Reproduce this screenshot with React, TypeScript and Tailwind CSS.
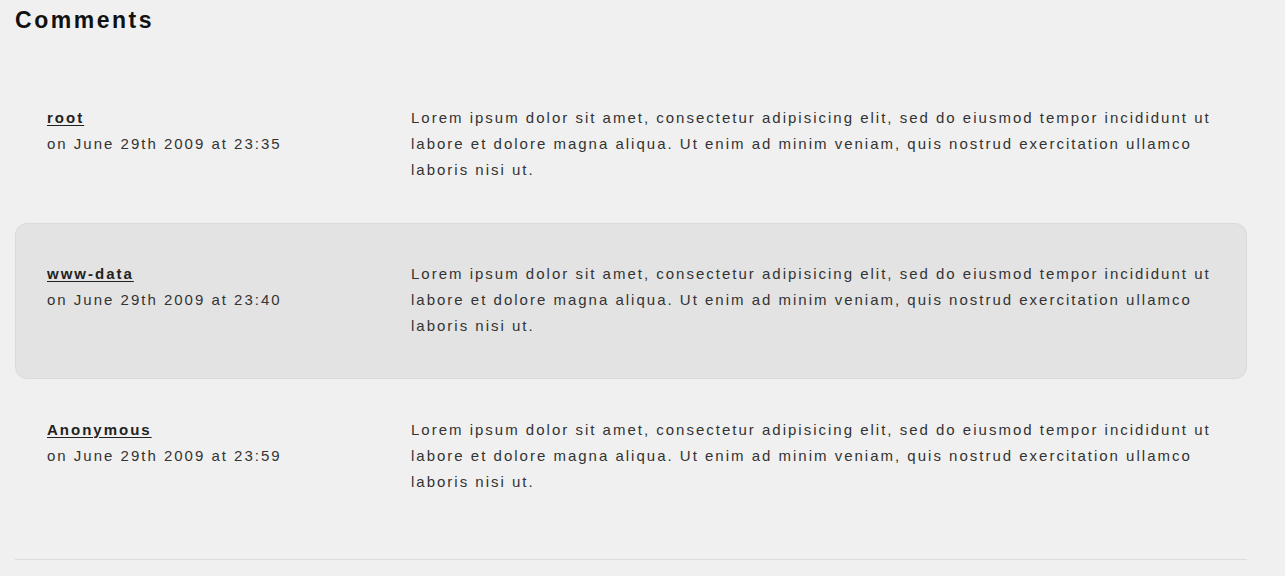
import React from 'react'

type Comment = {
  author: string
  date: string
  body: string
}

const lorem =
  'Lorem ipsum dolor sit amet, consectetur adipisicing elit, sed do eiusmod tempor incididunt ut labore et dolore magna aliqua. Ut enim ad minim veniam, quis nostrud exercitation ullamco laboris nisi ut.'

const comments: Comment[] = [
  { author: 'root', date: 'on June 29th 2009 at 23:35', body: lorem },
  { author: 'www-data', date: 'on June 29th 2009 at 23:40', body: lorem },
  { author: 'Anonymous', date: 'on June 29th 2009 at 23:59', body: lorem },
]

export default function App() {
  return (
    <div className="min-h-screen bg-[#f0f0f0] pl-[15px] pr-[38px] pt-[6px] pb-8 font-['Liberation_Sans',Arial,sans-serif] text-[#333] tracking-[0.125em]">
      {/* Header */}
      <h2 className="text-[23px] leading-[28px] font-bold tracking-[0.11em] text-[#111]">Comments</h2>

      {/* Comment list */}
      <div className="mt-[33px]">
        {comments.map((c, i) => (
          <div
            key={c.author}
            className={
              i % 2 === 1
                ? 'grid grid-cols-[364px_1fr] rounded-xl border border-[#dadada] bg-[#e3e3e3] px-[31px] pt-[37px] pb-[39px] text-[15px] leading-[26px]'
                : 'grid grid-cols-[364px_1fr] rounded-xl border border-transparent px-[31px] pt-[37px] pb-[39px] text-[15px] leading-[26px]'
            }
          >
            <div>
              <a href="#" className="font-bold text-[#222] underline underline-offset-2">
                {c.author}
              </a>
              <p>{c.date}</p>
            </div>
            <p>{c.body}</p>
          </div>
        ))}
      </div>

      <hr className="mt-[24px] border-0 border-t border-[#dcdcdc]" />
    </div>
  )
}
